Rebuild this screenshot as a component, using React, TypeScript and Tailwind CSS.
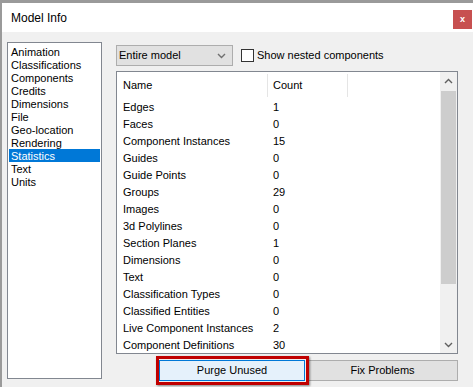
import React from "react";

const sections = [
  "Animation",
  "Classifications",
  "Components",
  "Credits",
  "Dimensions",
  "File",
  "Geo-location",
  "Rendering",
  "Statistics",
  "Text",
  "Units",
];

const stats: [string, string][] = [
  ["Edges", "1"],
  ["Faces", "0"],
  ["Component Instances", "15"],
  ["Guides", "0"],
  ["Guide Points", "0"],
  ["Groups", "29"],
  ["Images", "0"],
  ["3d Polylines", "0"],
  ["Section Planes", "1"],
  ["Dimensions", "0"],
  ["Text", "0"],
  ["Classification Types", "0"],
  ["Classified Entities", "0"],
  ["Live Component Instances", "2"],
  ["Component Definitions", "30"],
];

function Chevron({ up = false, color = "#606060" }: { up?: boolean; color?: string }) {
  return (
    <svg width="9" height="6" viewBox="0 0 9 6">
      <path
        d={up ? "M1 5 L4.5 1.5 L8 5" : "M1 1 L4.5 4.5 L8 1"}
        fill="none"
        stroke={color}
        strokeWidth="1.4"
      />
    </svg>
  );
}

export default function App() {
  return (
    <div
      className="w-[473px] h-[387px] overflow-hidden bg-[#f0f0f0] border-t-[3px] border-l-2 border-[#9a9a9a] text-[11px] text-black"
      style={{ fontFamily: '"Liberation Sans", Arial, sans-serif' }}
    >
      {/* title bar */}
      <div className="h-[29px] bg-white flex items-start justify-between">
        <div className="pl-[9px] pt-[8px] text-[12px] leading-[14px]">Model Info</div>
        <div className="mt-[7px] mr-px w-[19px] h-[19px] bg-[#c75050] flex items-center justify-center text-white font-bold text-[9px] leading-none pb-px">
          x
        </div>
      </div>

      {/* body */}
      <div className="flex pl-[5px] pt-[10px]">
        {/* section list */}
        <div className="w-[95px] h-[337px] border border-[#828790] bg-white pt-[2px] pl-px pr-px">
          {sections.map((s) => (
            <div
              key={s}
              className={
                "h-[13px] leading-[13px] pl-[2px] pt-px " +
                (s === "Statistics" ? "bg-[#0078d7] text-white" : "")
              }
            >
              <span className="block leading-[12px]">{s}</span>
            </div>
          ))}
        </div>

        {/* right pane */}
        <div className="ml-[14px] flex flex-col">
          <div className="mt-[3px] flex items-center">
            <div className="w-[117px] h-[21px] border border-[#adadad] bg-[#e1e1e1] flex items-center justify-between pl-[2px] pr-[6px]">
              <span>Entire model</span>
              <Chevron color="#707070" />
            </div>
            <div className="ml-[8px] w-[13px] h-[13px] border border-[#333333] bg-white" />
            <span className="ml-[3px]">Show nested components</span>
          </div>

          {/* table */}
          <div className="mt-[5px] w-[342px] h-[283px] border border-[#828790] bg-white flex">
            <div className="flex-1 flex flex-col">
              <div className="h-[26px] flex shrink-0">
                <div className="w-[150px] pl-[6px] pt-px flex items-center">Name</div>
                <div className="w-px mt-[2px] mb-px bg-[#e5e5e5]" />
                <div className="w-[79px] pl-[5px] pt-px flex items-center">Count</div>
                <div className="w-px mt-[2px] mb-px bg-[#e5e5e5]" />
              </div>
              {stats.map(([n, c]) => (
                <div key={n} className="h-[17px] flex items-center shrink-0 pt-px">
                  <div className="w-[151px] pl-[6px]">{n}</div>
                  <div className="pl-[5px]">{c}</div>
                </div>
              ))}
            </div>
            {/* scrollbar */}
            <div className="w-[17px] bg-[#f0f0f0] flex flex-col">
              <div className="h-[17px] flex items-center justify-center">
                <Chevron up />
              </div>
              <div className="mt-[2px] mx-px h-[193px] bg-[#cdcdcd]" />
              <div className="flex-1" />
              <div className="h-[17px] flex items-center justify-center">
                <Chevron />
              </div>
            </div>
          </div>

          {/* buttons */}
          <div className="mt-[6px] flex">
            <div className="relative ml-[43px]">
              <div className="w-[146px] h-[21px] border border-[#0078d7] bg-[#e5f1fb] flex items-center justify-center">
                Purge Unused
              </div>
              <div className="absolute left-[-3px] top-[-4px] w-[153px] h-[29px] border-[3px] border-[#c00000] shadow-[1px_1px_2px_rgba(0,0,0,0.45)]" />
            </div>
            <div className="ml-[2px] w-[151px] h-[21px] border border-[#adadad] bg-[#e1e1e1] flex items-center justify-center">
              Fix Problems
            </div>
          </div>
        </div>
      </div>
    </div>
  );
}
